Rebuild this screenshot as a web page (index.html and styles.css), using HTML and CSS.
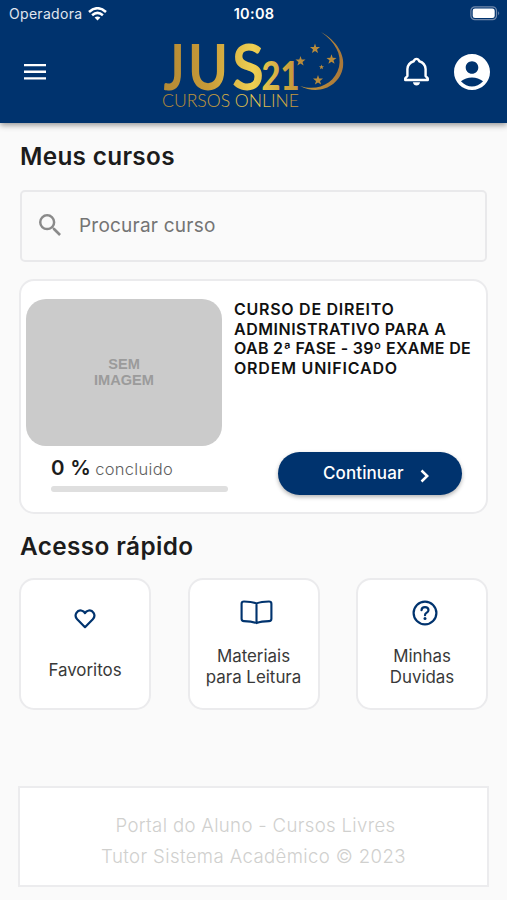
FILE: index.html
```html
<!DOCTYPE html>
<html lang="pt-BR">
<head>
<meta charset="utf-8">
<title>Meus cursos</title>
<link rel="stylesheet" href="styles.css">
</head>
<body>
<header class="header">
  <div class="status">
    <div class="carrier"><span>Operadora</span>
      <svg width="19" height="14" viewBox="0 0 19 14" fill="none" stroke="#fff" stroke-width="2.5"><path d="M1 5Q9.500-2.600 18 5M4.100 8.300Q9.500 3.500 14.900 8.300"/><path d="M6.600 10.600Q9.500 8.200 12.400 10.600L9.500 13.600Z" fill="#fff" stroke="none"/></svg>
    </div>
    <span class="clock">10:08</span>
    <svg class="battery" width="31" height="15" viewBox="0 0 31 15"><rect x=".9" y=".8" width="25.600" height="12.900" rx="4" fill="none" stroke="#7189ab" stroke-width="1.200"/><rect x="2.700" y="2.500" width="22" height="9.500" rx="2.300" fill="#fff"/><path d="M28.200 5.200q2 2 0 4z" fill="#7189ab"/></svg>
  </div>
  <div class="bar">
    <svg class="menu" width="24" height="16" viewBox="0 0 24 16" fill="#fff"><path d="M1 0h22v2.300H1zM1 6.600h22v2.300H1zM1 13.200h22v2.300H1z"/></svg>
    <svg class="logo" width="184" height="80" viewBox="160 30 184 80">
      <defs>
        <linearGradient id="gold" gradientUnits="userSpaceOnUse" x1="162" y1="0" x2="342" y2="0"><stop offset="0" stop-color="#b48a35"/><stop offset=".25" stop-color="#c79a38"/><stop offset=".5" stop-color="#efd052"/><stop offset=".72" stop-color="#c79b3b"/><stop offset="1" stop-color="#a9783a"/></linearGradient>
      </defs>
      <g fill="url(#gold)">
        <text class="logo-letter" x="162.500" y="90" textLength="21" lengthAdjust="spacingAndGlyphs">J</text>
        <text class="logo-letter" x="187" y="90" textLength="40" lengthAdjust="spacingAndGlyphs">U</text>
        <text class="logo-letter" x="231" y="90" textLength="32" lengthAdjust="spacingAndGlyphs">S</text>
        <text class="logo-number" x="260.500" y="90" textLength="38" lengthAdjust="spacingAndGlyphs">21</text>
        <text class="logo-tagline" x="161" y="106.500" textLength="137" lengthAdjust="spacingAndGlyphs">CURSOS ONLINE</text>
        <path d="M320 32C336 41 344 55 342 67C339 86 318 96 299 86C317 92 334 83 338 67C341 54 334 42 320 32Z"/>
        <path id="star" d="M314 43.500l1.200 3.500 3.800.1-3 2.300 1.100 3.600-3.100-2.100-3.100 2.100 1.100-3.600-3-2.300 3.800-.1z"/>
        <use href="#star" transform="translate(-14.500 12.500)"/>
        <use href="#star" transform="translate(16.500 10.800)"/>
        <use href="#star" transform="translate(3 31.500)"/>
        <use href="#star" transform="translate(163.500 42.800) scale(.5)"/>
      </g>
    </svg>
    <svg class="bell" width="27" height="30" viewBox="0 0 28 32"><path d="M2 24.500v-1.700l2.300-2.500v-7.500Q4.800 6.300 11 4.500Q12 2 14 2T17 4.500Q23.200 6.300 23.700 12.800v7.500l2.300 2.500v1.700Z" fill="none" stroke="#fff" stroke-width="2.600" stroke-linejoin="round"/><path d="M10.200 27h7.600q-.8 3.400-3.800 3.400T10.200 27z" fill="#fff"/></svg>
    <svg class="avatar" width="36" height="36" viewBox="2 2 20 20" fill="#fff"><path d="M12 2C6.480 2 2 6.480 2 12s4.480 10 10 10 10-4.480 10-10S17.520 2 12 2zm0 4c1.930 0 3.500 1.570 3.500 3.500S13.930 13 12 13s-3.500-1.570-3.500-3.500S10.070 6 12 6zm0 14c-2.030 0-4.430-.82-6.140-2.880C7.550 15.800 9.680 15 12 15s4.450.8 6.140 2.120C16.430 19.180 14.030 20 12 20z"/></svg>
  </div>
</header>
<main class="content">
  <h1 class="heading">Meus cursos</h1>
  <div class="search">
    <svg width="22" height="22" viewBox="3 3 17.500 17.500" fill="#8a8a8a"><path d="M15.500 14h-.79l-.28-.27A6.471 6.471 0 0 0 16 9.500 6.500 6.500 0 1 0 9.500 16c1.610 0 3.090-.59 4.230-1.570l.27.28v.79l5 4.990L20.490 19l-4.990-5zm-6 0C7.010 14 5 11.990 5 9.500S7.010 5 9.500 5 14 7.010 14 9.500 11.990 14 9.500 14z"/></svg>
    <span>Procurar curso</span>
  </div>
  <section class="course">
    <div class="course-top">
      <div class="thumb">SEM<br>IMAGEM</div>
      <h2 class="course-title"><span class="t1">CURSO DE DIREITO</span><span class="t2">ADMINISTRATIVO PARA A</span><span class="t3">OAB 2ª FASE - 39º EXAME DE</span><span class="t4">ORDEM UNIFICADO</span></h2>
    </div>
    <div class="course-bottom">
      <div class="progress">
        <div class="progress-text"><b>0 %</b><span>concluido</span></div>
        <div class="track"></div>
      </div>
      <div class="button"><span>Continuar</span>
        <svg width="10" height="14" viewBox="0 0 10 14" fill="none" stroke="#fff" stroke-width="2.500"><path d="M1.500 1.500L7.200 7L1.500 12.500"/></svg>
      </div>
    </div>
  </section>
  <h2 class="heading quick-heading">Acesso rápido</h2>
  <div class="quick">
    <div class="tile">
      <div class="tile-icon heart"><svg width="22" height="20" viewBox="0 0 22 20"><path d="M11 18.200L3.200 10.300C-.7 6 3.500.2 8 1.700Q10 2.300 11 4.100Q12 2.300 14 1.700C18.500.2 22.700 6 18.800 10.300Z"/></svg></div>
      <span>Favoritos</span>
    </div>
    <div class="tile">
      <div class="tile-icon shifted"><svg width="33" height="25" viewBox="0 0 34 26"><path d="M17 3.500Q12 1.500 4 1.500Q1.500 1.500 1.500 4V19.500Q1.500 22 4 22Q12 22 17 24Q22 22 30 22Q32.500 22 32.500 19.500V4Q32.500 1.500 30 1.500Q22 1.500 17 3.500V24"/></svg></div>
      <span>Materiais<br>para Leitura</span>
    </div>
    <div class="tile">
      <div class="tile-icon shifted"><svg width="26" height="26" viewBox="0 0 26 26"><circle cx="13" cy="13" r="11.400"/><path d="M9.500 10.200Q9.700 7.200 13 7.200T16.500 10Q16.500 11.800 14.600 12.700Q13 13.500 13 15.200"/><circle class="dot" cx="13" cy="18.400" r="1.500"/></svg></div>
      <span>Minhas<br>Duvidas</span>
    </div>
  </div>
  <footer class="footer"><span class="f1">Portal do Aluno - Cursos Livres</span><span class="f2">Tutor Sistema Acadêmico © 2023</span></footer>
</main>
</body>
</html>
```
FILE: styles.css
```css
* { box-sizing: border-box; }
body { margin: 0; height: 900px; background: #fafafa; font-family: Inter, sans-serif; color: #1c1c1c; overflow: hidden; }
svg { display: block; }
.header { height: 123px; background: #00336e; color: #fff; box-shadow: 0 2px 6px rgba(0,0,0,.42); }
.status { height: 27px; padding: 0 6px 0 9px; display: grid; grid-template-columns: 1fr auto 1fr; align-items: center; }
.carrier { display: flex; gap: 6px; align-items: center; font-size: 14px; letter-spacing: .3px; color: #e0e6ef; }
.clock { font-size: 14.500px; font-weight: 600; letter-spacing: .3px; margin-left: -2px; }
.battery { justify-self: end; }
.bar { height: 89px; padding: 0 17px 0 23px; display: flex; align-items: center; }
.logo { margin: -3px 0 0 114px; overflow: visible; }
.logo-letter { font: 700 63px Lato, sans-serif; }
.logo-number { font: 900 39px Lato, sans-serif; }
.logo-tagline { font: 300 18px Lato, sans-serif; }
.bell { margin-left: 58px; }
.avatar { margin-left: auto; }
.content { padding: 0 19px; }
.heading { margin: 17px 1px 0; height: 32px; line-height: 33px; font-size: 24.300px; font-weight: 600; letter-spacing: .32px; white-space: nowrap; }
.search { margin: 18px 1px 0; height: 72px; border: 2px solid #e9e9eb; border-radius: 5px; padding: 0 17px 2px; display: flex; align-items: center; gap: 18px; font-size: 19px; letter-spacing: .22px; color: #747474; }
.course { margin: 17px 0 0; height: 235px; border: 2px solid #ebebed; border-radius: 15px; background: #fff; padding: 18px 5px 0; }
.course-top { display: flex; }
.thumb { width: 196px; height: 147px; border-radius: 20px; background: #cbcbcb; color: #9b9b9b; font: 700 14.600px/16px "Liberation Sans", sans-serif; text-align: center; padding-top: 57px; }
.course-title { margin: 1px 0 0 12px; font-size: 16px; line-height: 19.500px; font-weight: 600; color: #111; white-space: nowrap; }
.course-title span { display: block; }
.t1 { letter-spacing: .730px; }
.t2 { letter-spacing: .520px; }
.t3 { letter-spacing: .310px; }
.t4 { letter-spacing: .800px; }
.course-bottom { display: flex; justify-content: space-between; padding: 6px 19px 0 25px; }
.progress { width: 177px; padding-top: 3px; }
.progress-text { display: flex; align-items: baseline; gap: 4px; line-height: 26px; white-space: nowrap; }
.progress-text b { font-size: 20.500px; font-weight: 600; letter-spacing: .3px; }
.progress-text span { font-size: 16.500px; letter-spacing: .3px; color: #606060; font-weight: 300; }
.track { margin-top: 4px; height: 6px; border-radius: 3px; background: #dfdfdf; }
.button { width: 184px; height: 43px; border-radius: 22px; background: #00336e; color: #fff; box-shadow: 0 2px 4px rgba(0,0,0,.3); display: flex; align-items: center; padding-left: 45px; gap: 16px; font-size: 17px; font-weight: 500; letter-spacing: .1px; }
.button span { margin-top: -1px; }
.button svg { margin-top: 4px; }
.quick-heading { margin-top: 16px; letter-spacing: .4px; }
.quick { margin: 16px 0 0; display: grid; grid-template-columns: repeat(3, 132px); justify-content: space-between; }
.tile { height: 132px; border: 2px solid #ebebed; border-radius: 15px; background: #fff; display: flex; flex-direction: column; align-items: center; padding-top: 20px; text-align: center; font-size: 16.900px; line-height: 21px; color: #393939; white-space: nowrap; }
.tile-icon { height: 46px; }
.tile-icon svg { fill: none; stroke: #00336e; stroke-width: 2.200; stroke-linejoin: round; stroke-linecap: round; }
.tile-icon .dot { fill: #00336e; stroke: none; }
.shifted { padding-left: 6px; }
.heart { height: 60px; padding-top: 9px; }
.footer { margin: 76px -1px 0; height: 101px; border: 2px solid #ececee; background: #fff; display: flex; flex-direction: column; align-items: center; padding-top: 22px; font-size: 18.600px; line-height: 30.500px; font-weight: 300; color: #d0d0ce; white-space: nowrap; }
.f1 { letter-spacing: .330px; padding-left: 4px; }
.f2 { letter-spacing: .380px; }
```
